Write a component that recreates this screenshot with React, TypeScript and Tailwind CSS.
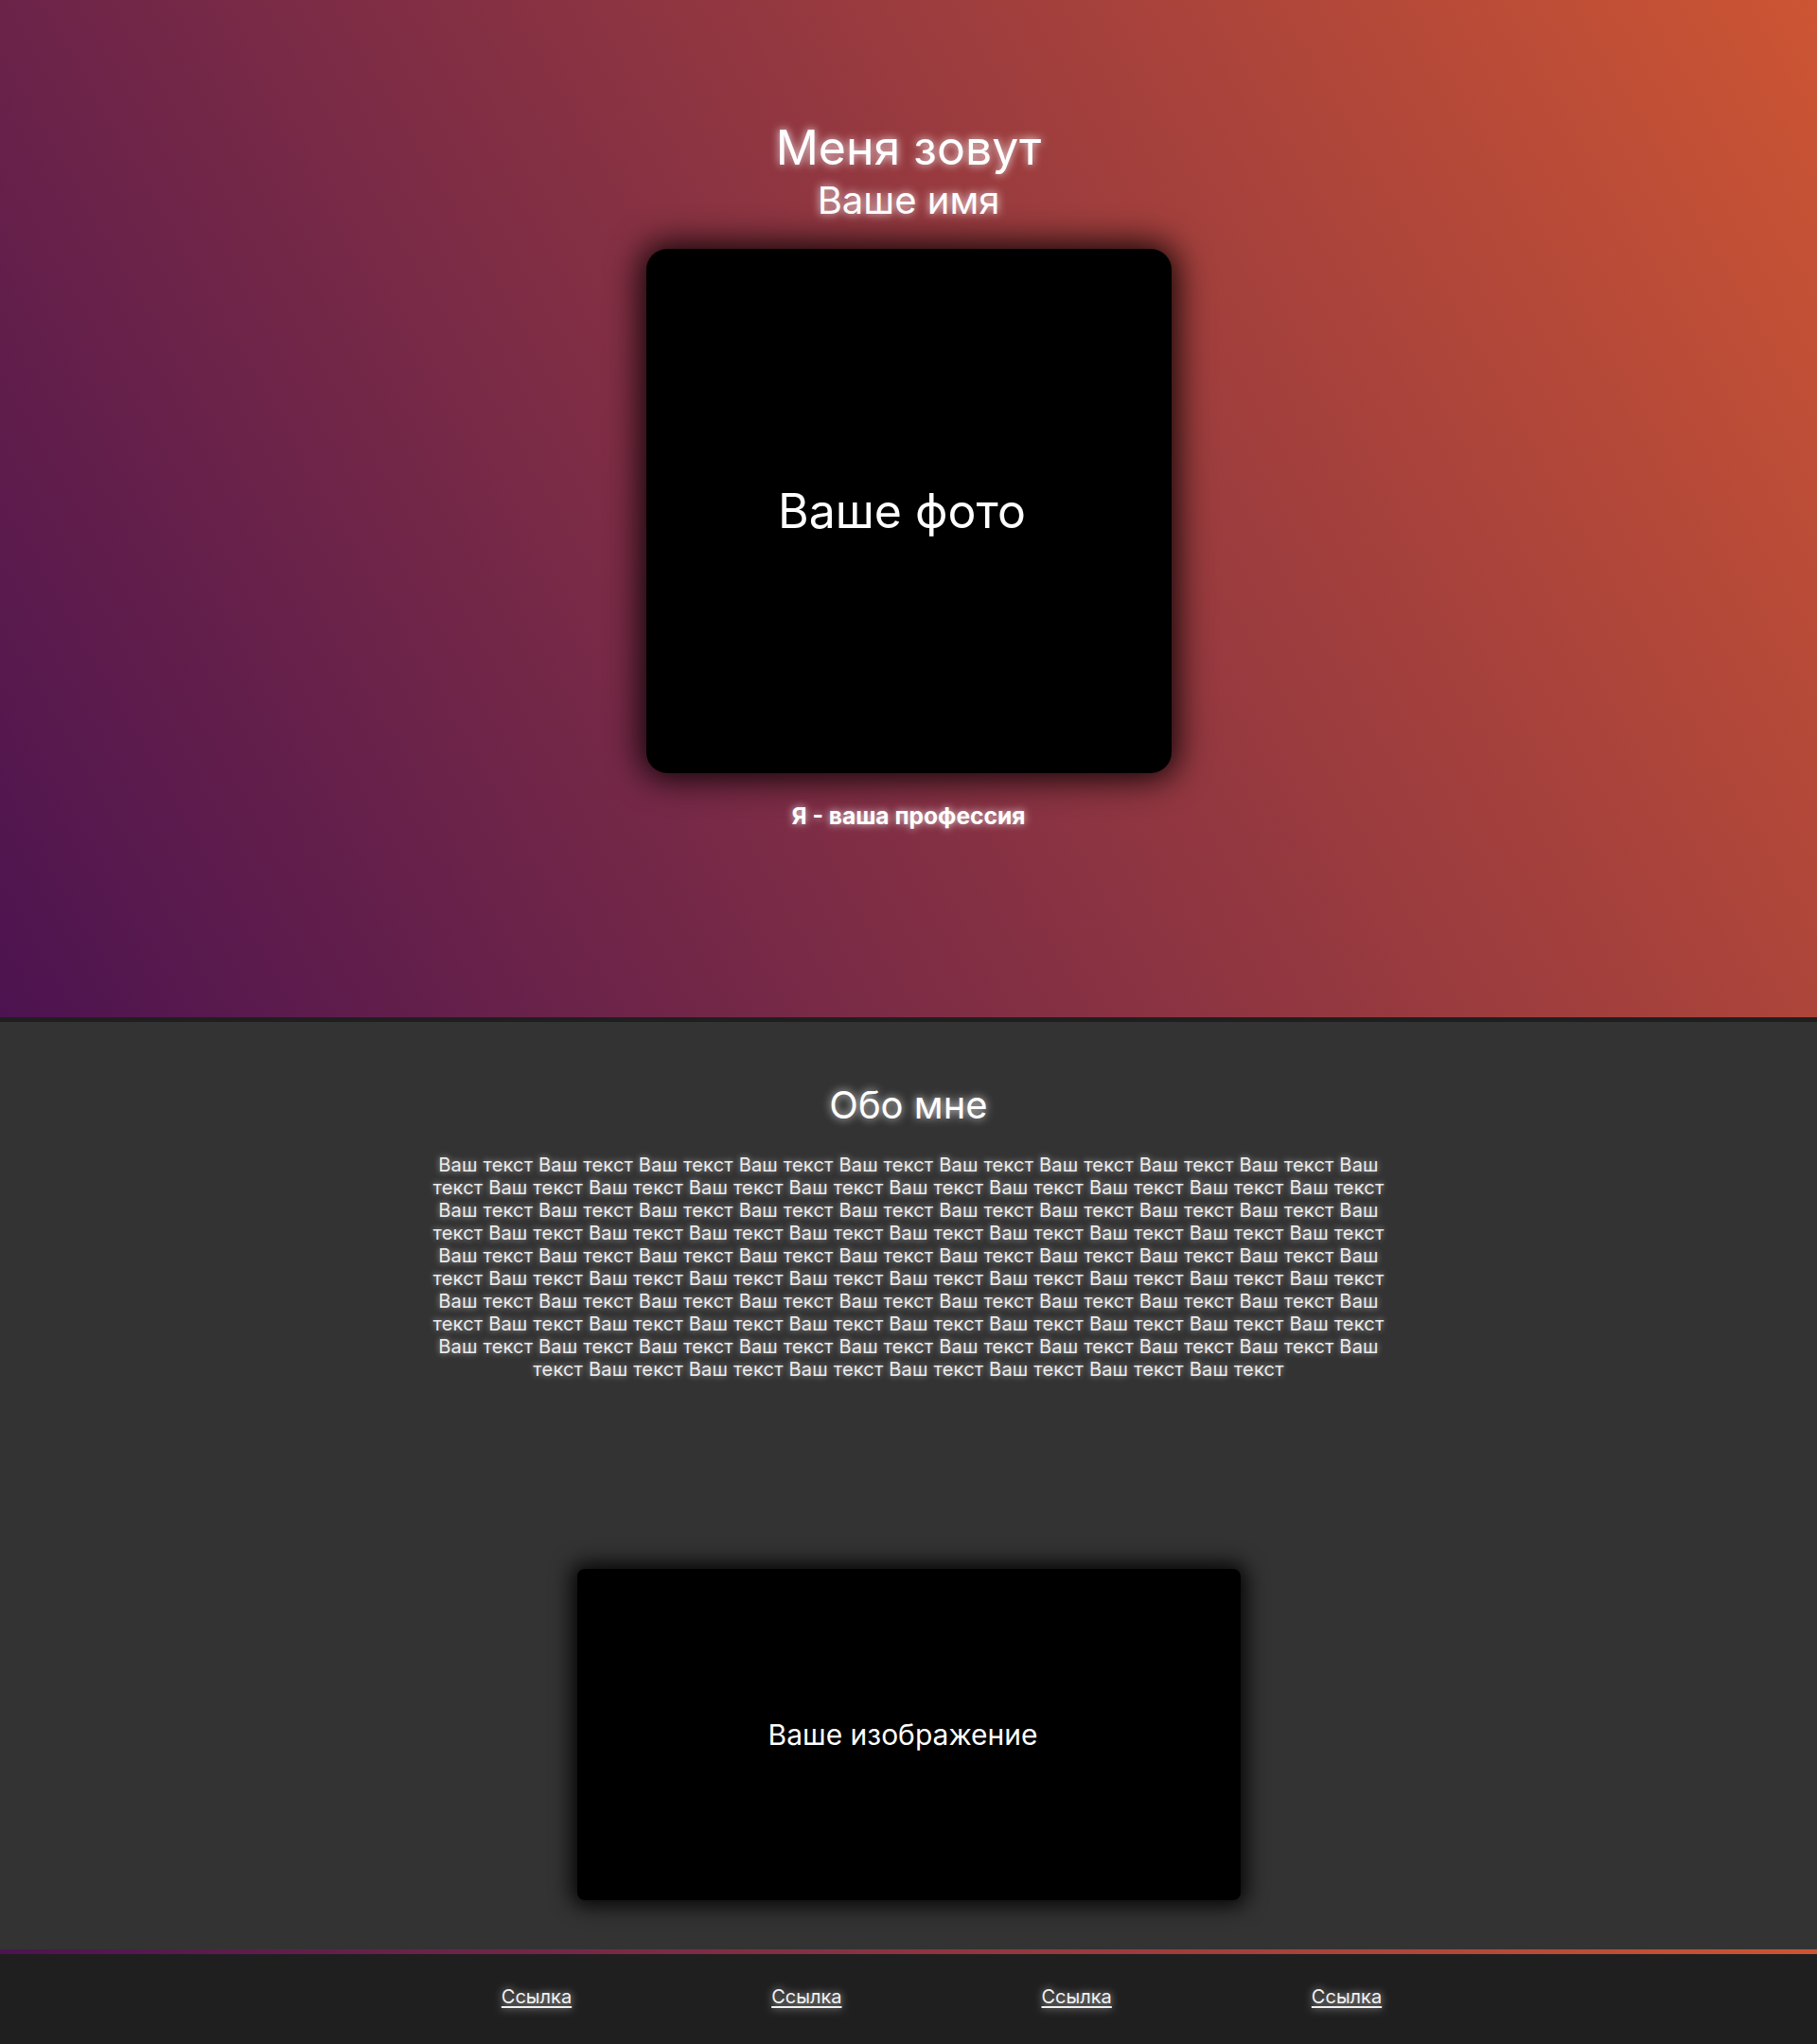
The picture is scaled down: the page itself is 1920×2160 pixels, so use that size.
const words = Array.from({ length: 93 }, () => 'Ваш текст').join(' ');

const links = ['Ссылка', 'Ссылка', 'Ссылка', 'Ссылка'];

const App = () => {
  return (
    <div className="min-h-screen bg-[#333333] font-['Inter',sans-serif] text-white">
      <header className="flex h-[1080px] flex-col items-center border-b-[5px] border-[#1f1f1f] bg-[linear-gradient(60deg,#4c1350,#cc5533)] pt-[126px]">
        <h1 className="text-[50px] leading-[60px] [text-shadow:0_0_10px_rgba(255,255,255,0.9)]">
          Меня зовут
        </h1>
        <p className="mt-[2px] text-[40px] leading-[48px] [text-shadow:0_0_10px_rgba(255,255,255,0.9)]">
          Ваше имя
        </p>
        <div className="mt-[27px] flex h-[554px] w-[555px] items-center justify-center rounded-[22px] bg-black pr-[14px] shadow-[0_0_35px_6px_rgba(0,0,0,0.9)]">
          <span className="text-[50px] leading-[60px]">Ваше фото</span>
        </div>
        <p className="mt-[30px] text-[24.6px] font-bold leading-[30px] [text-shadow:0_0_8px_rgba(255,255,255,0.8)]">
          Я - ваша профессия
        </p>
      </header>

      <section className="flex flex-col items-center pb-[52px] pt-[64px]">
        <h2 className="text-[40px] leading-[48px] [text-shadow:0_0_10px_rgba(255,255,255,0.85)]">
          Обо мне
        </h2>
        <p className="mt-[27px] w-[1012px] text-center text-[20px] leading-[24px] tracking-[0.2px] text-[#ececec] [text-shadow:0_0_6px_rgba(255,255,255,0.6)]">
          {words}
        </p>
        <div className="mt-[199px] flex h-[350px] w-[701px] items-center justify-center rounded-lg bg-black pr-[12px] shadow-[0_0_22px_6px_rgba(0,0,0,0.9)]">
          <span className="text-[30px] leading-[36px]">Ваше изображение</span>
        </div>
      </section>

      <div className="h-[5px] bg-[linear-gradient(to_right,#4c1350,#cc5533)]" />
      <footer className="flex h-[95px] items-center justify-center gap-[211px] bg-[#1f1f1f] pb-[5px] pl-[70px]">
        {links.map((label, i) => (
          <a
            key={i}
            href="#"
            className="text-[20px] leading-[24px] text-[#f2f2f2] underline underline-offset-[3px] [text-shadow:0_0_8px_rgba(255,255,255,0.75)]"
          >
            {label}
          </a>
        ))}
      </footer>
    </div>
  );
};

export default App;
